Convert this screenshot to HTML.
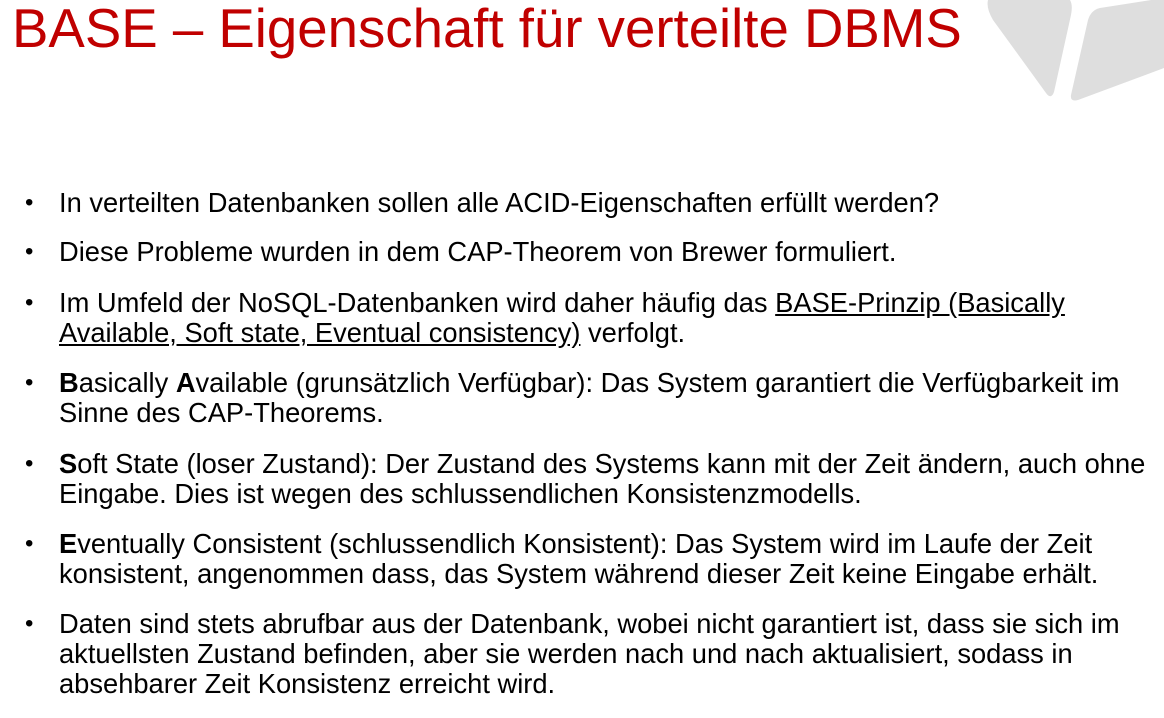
<!DOCTYPE html>
<html><head><meta charset="utf-8"><style>
body{margin:0;width:1164px;height:718px;background:#fff;overflow:hidden;position:relative;font-family:"Liberation Sans",sans-serif}
h1{position:absolute;left:12px;top:-6px;margin:0;font-weight:normal;color:#c00000;font-size:54.6px;line-height:70px;white-space:nowrap}
.p{position:absolute;left:59px;font-size:27.3px;line-height:30px;color:#000;white-space:nowrap}
.p:before{content:"•";position:absolute;left:-34px;font-size:24px}
u{text-decoration:underline}
</style></head><body>
<svg style="position:absolute;left:0;top:0" width="1164" height="718">
<path d="M988,0 L1070,0 Q1073,5 1071,15 L1054,92 Q1051,100 1046,93 L993,20 Q986,8 988,0Z" fill="#dedede"/>
<path d="M1100,8 L1164,-2 L1164,68 L1078,100 Q1070,102 1071,95 L1088,20 Q1091,10 1100,8Z" fill="#dedede"/>
</svg>
<h1>BASE – Eigenschaft für verteilte DBMS</h1>
<div class="p" style="top:188px">In verteilten Datenbanken sollen alle ACID-Eigenschaften erfüllt werden?</div>
<div class="p" style="top:237px">Diese Probleme wurden in dem CAP-Theorem von Brewer formuliert.</div>
<div class="p" style="top:288px">Im Umfeld der NoSQL-Datenbanken wird daher häufig das <u>BASE-Prinzip (Basically<br>Available, Soft state, Eventual consistency)</u> verfolgt.</div>
<div class="p" style="top:368px"><b>B</b>asically <b>A</b>vailable (grunsätzlich Verfügbar): Das System garantiert die Verfügbarkeit im<br>Sinne des CAP-Theorems.</div>
<div class="p" style="top:449px"><b>S</b>oft State (loser Zustand): Der Zustand des Systems kann mit der Zeit ändern, auch ohne<br>Eingabe. Dies ist wegen des schlussendlichen Konsistenzmodells.</div>
<div class="p" style="top:529px"><b>E</b>ventually Consistent (schlussendlich Konsistent): Das System wird im Laufe der Zeit<br>konsistent, angenommen dass, das System während dieser Zeit keine Eingabe erhält.</div>
<div class="p" style="top:609px">Daten sind stets abrufbar aus der Datenbank, wobei nicht garantiert ist, dass sie sich im<br>aktuellsten Zustand befinden, aber sie werden nach und nach aktualisiert, sodass in<br>absehbarer Zeit Konsistenz erreicht wird.</div>
</body></html>
